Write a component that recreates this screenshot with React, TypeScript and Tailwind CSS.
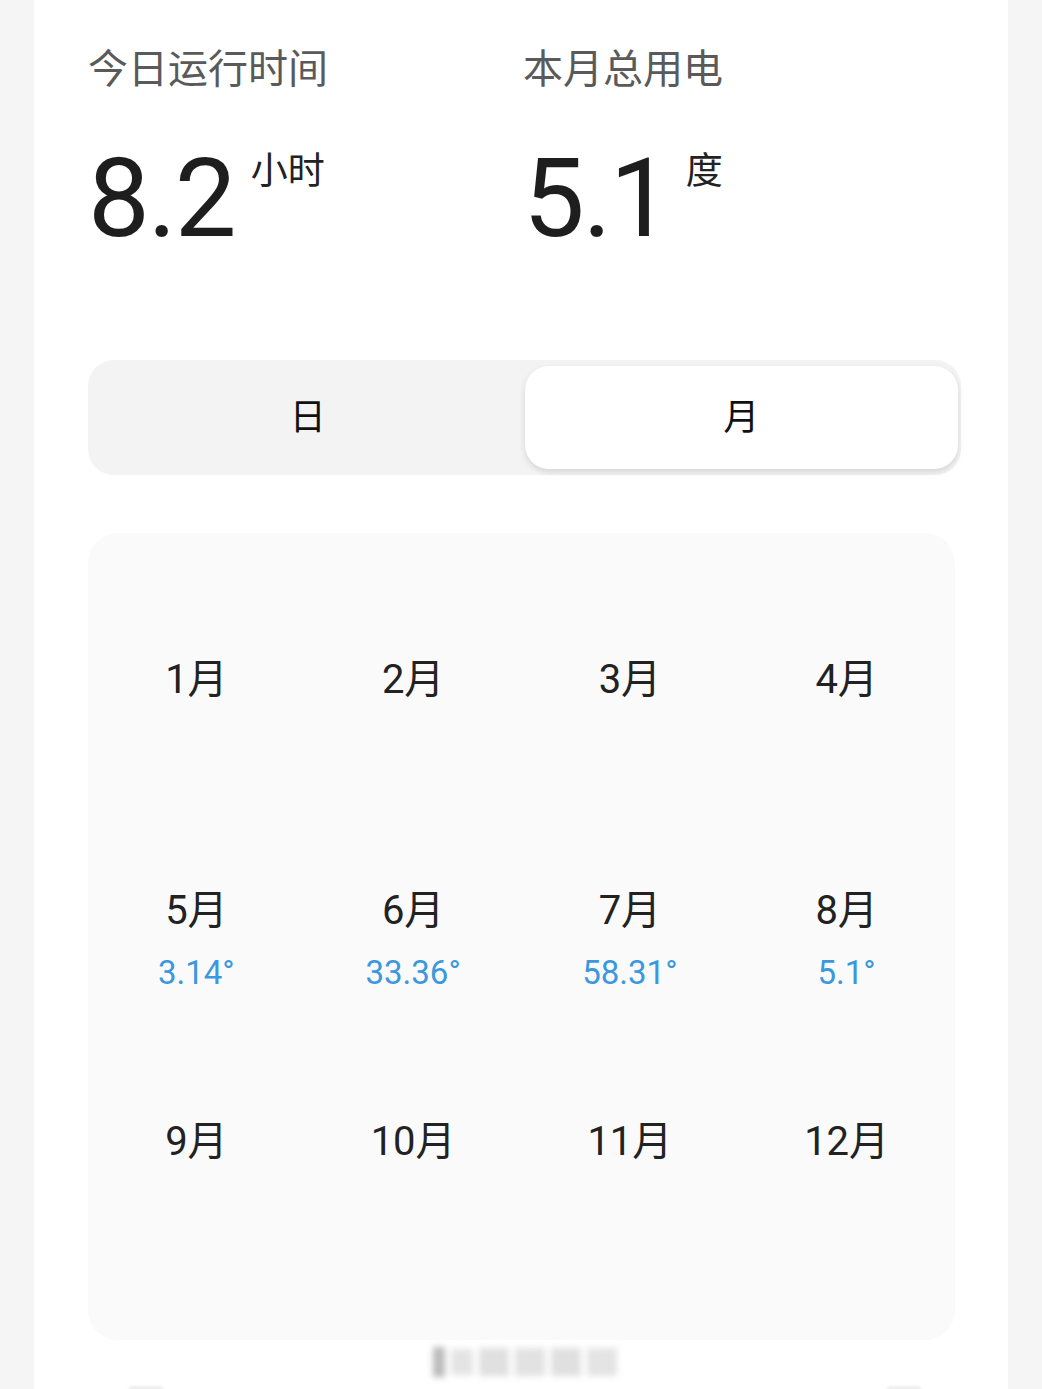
import React from 'react';

const months = [
  { name: '1月' },
  { name: '2月' },
  { name: '3月' },
  { name: '4月' },
  { name: '5月', value: '3.14°' },
  { name: '6月', value: '33.36°' },
  { name: '7月', value: '58.31°' },
  { name: '8月', value: '5.1°' },
  { name: '9月' },
  { name: '10月' },
  { name: '11月' },
  { name: '12月' },
];

const font = { fontFamily: "Roboto, 'Noto Sans CJK SC', sans-serif" };

function Stat({ label, value, unit }: { label: string; value: string; unit: string }) {
  return (
    <div>
      <p className="text-[40px] leading-[40px] text-[#5a5a5a]">{label}</p>
      <div className="mt-[54px] flex items-start">
        <span className="text-[110px] leading-none text-[#1e1e1e] tracking-[-2px]">{value}</span>
        <span className="ml-[16px] mt-[9px] text-[37px] leading-none text-[#222]">{unit}</span>
      </div>
    </div>
  );
}

export default function App() {
  return (
    <div className="h-screen bg-[#f5f5f5] px-[34px] overflow-hidden" style={font}>
      <div className="bg-white pl-[54px] pr-[46px] pt-[50px] h-[1389px] overflow-hidden">
        {/* Stats */}
        <div className="grid grid-cols-2 w-[870px]">
          <Stat label="今日运行时间" value="8.2" unit="小时" />
          <Stat label="本月总用电" value="5.1" unit="度" />
        </div>

        {/* Day / month toggle */}
        <div className="mt-[106px] w-[873px] h-[115px] rounded-[26px] bg-[#f3f3f3] px-[3px] py-[6px] flex">
          <button className="flex-1 flex items-center justify-center text-[36px] text-[#111]">日</button>
          <button className="flex-1 flex items-center justify-center rounded-[24px] bg-white text-[36px] text-[#111] shadow-[0_3px_6px_rgba(0,0,0,0.12)]">
            月
          </button>
        </div>

        {/* Month grid */}
        <div className="mt-[58px] w-[867px] h-[807px] rounded-[30px] bg-[#fafafa] pt-[123px]">
          <div className="grid grid-cols-4">
            {months.map((m) => (
              <div key={m.name} className="h-[231px] flex flex-col items-center">
                <span className="text-[40px] leading-[48px] text-[#222]">{m.name}</span>
                {m.value && (
                  <span className="mt-[18px] text-[33px] leading-[40px] text-[#3b98df]">{m.value}</span>
                )}
              </div>
            ))}
          </div>
        </div>

        {/* Footer, partly cut off */}
        <div className="mt-[4px] flex items-start justify-center">
          <div className="flex items-center gap-[6px] blur-[3px] h-[36px]">
            <span className="w-[12px] h-[30px] bg-[#bbb]" />
            <span className="w-[22px] h-[26px] bg-[#e4e4e4]" />
            <span className="w-[30px] h-[28px] bg-[#e0e0e0]" />
            <span className="w-[30px] h-[28px] bg-[#e2e2e2]" />
            <span className="w-[30px] h-[28px] bg-[#e0e0e0]" />
            <span className="w-[30px] h-[28px] bg-[#e4e4e4]" />
          </div>
        </div>
        <div className="mt-[6px] flex justify-between pl-[40px] pr-[40px]">
          <span className="w-[36px] h-[10px] rounded-full bg-[#eee] blur-[1px]" />
          <span className="w-[36px] h-[10px] rounded-full bg-[#eee] blur-[1px]" />
        </div>
      </div>
    </div>
  );
}
